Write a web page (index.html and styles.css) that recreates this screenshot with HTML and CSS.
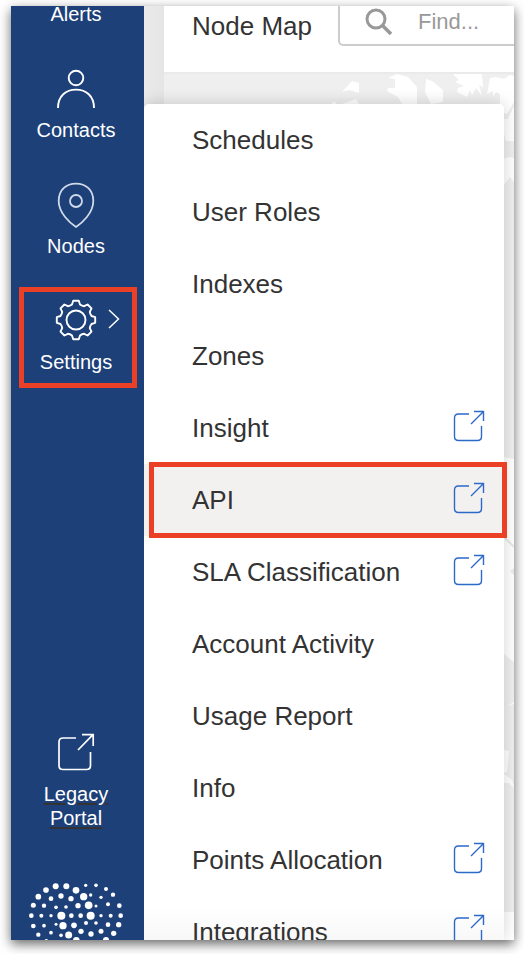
FILE: index.html
```html
<!DOCTYPE html>
<html lang="en">
<head>
<meta charset="utf-8">
<title>Node Map</title>
<link rel="stylesheet" href="styles.css">
</head>
<body>
<svg class="defs" width="0" height="0" aria-hidden="true">
  <symbol id="external" viewBox="452 408 36 36">
    <path d="M469 414H458.500Q454.500 414 454.500 418V436.500Q454.500 440.500 458.500 440.500H477.500Q481.500 440.500 481.500 436.500V426M471 424L483.500 411.500M474 411.500H483.500V421" fill="none" stroke="currentColor" stroke-width="1.400"/>
  </symbol>
</svg>
<div class="window">
  <nav class="sidebar">
    <a class="item first"><span>Alerts</span></a>
    <a class="item">
      <svg class="icon" viewBox="46 66 60 48"><g fill="none" stroke="#fff" stroke-width="1.900"><circle cx="76" cy="78" r="7.300"/><path d="M58 108C58 96 66 89.600 76 89.600S94 96 94 108"/></g></svg>
      <span>Contacts</span>
    </a>
    <a class="item">
      <svg class="icon" viewBox="46 182 60 48"><g fill="none" stroke="#d0d9e8" stroke-width="1.800"><circle cx="76" cy="201" r="6"/><path d="M76 227C70 223 58.700 213 58.700 201C58.700 190 66 183.700 76 183.700S93.300 190 93.300 201C93.300 213 82 223 76 227Z"/></g></svg>
      <span>Nodes</span>
    </a>
    <a class="item settings">
      <svg class="icon" viewBox="46 298 60 48"><g transform="translate(76 320)" fill="none" stroke="#fff" stroke-width="1.900" stroke-linejoin="round"><circle r="9.500"/><path d="M-2.800-19.200H2.800L4-15.500Q6-14 8.100-13.800L11.600-15.500L15.500-11.600L13.800-8.100Q14-6 15.500-4L19.200-2.800V2.800L15.500 4Q14 6 13.800 8.100L15.500 11.600L11.600 15.500L8.100 13.800Q6 14 4 15.500L2.800 19.200H-2.800L-4 15.500Q-6 14-8.100 13.800L-11.600 15.500L-15.500 11.600L-13.800 8.100Q-14 6-15.500 4L-19.200 2.800V-2.800L-15.500-4Q-14-6-13.800-8.100L-15.500-11.600L-11.600-15.500L-8.100-13.800Q-6-14-4-15.500Z"/></g></svg>
      <svg class="chevron" viewBox="0 0 12 20"><path d="M1 1L10.500 10L1 19" fill="none" stroke="#fff" stroke-width="1.500"/></svg>
      <span>Settings</span>
    </a>
    <a class="item legacy">
      <svg class="icon" viewBox="46 730 60 48"><path d="M76 738H63Q59 738 59 742V765.500Q59 769.500 63 769.500H86.500Q90.500 769.500 90.500 765.500V752M78 750L93 734.700M82 734.700H93.200V746" fill="none" stroke="#fff" stroke-width="1.700"/></svg>
      <span>Legacy<br>Portal</span>
    </a>
    <svg class="logo" viewBox="84 60 288 180"><g fill="#fff">
      <circle cx="167" cy="79" r="9"/><circle cx="199" cy="79" r="9"/><circle cx="257" cy="76" r="5"/><circle cx="288" cy="76" r="5.500"/><circle cx="138" cy="90" r="8.500"/><circle cx="228" cy="91" r="10"/><circle cx="318" cy="87" r="6"/>
      <circle cx="115" cy="110" r="8.500"/><circle cx="153" cy="116" r="7"/><circle cx="183" cy="108" r="8"/><circle cx="213" cy="116" r="8"/><circle cx="251" cy="110" r="11"/><circle cx="272" cy="105" r="5"/><circle cx="303" cy="112" r="5"/><circle cx="339" cy="104" r="6.500"/>
      <circle cx="100" cy="136" r="7.500"/><circle cx="132" cy="137" r="6.500"/><circle cx="168" cy="142" r="5.500"/><circle cx="198" cy="141" r="5.500"/><circle cx="234" cy="137" r="8"/><circle cx="266" cy="136" r="11.500"/><circle cx="288" cy="138" r="4.500"/><circle cx="324" cy="133" r="6"/><circle cx="358" cy="137" r="7"/>
      <circle cx="94" cy="167" r="7"/><circle cx="124" cy="167" r="6"/><circle cx="153" cy="167" r="5"/><circle cx="184" cy="167" r="12"/><circle cx="214" cy="167" r="7"/><circle cx="242" cy="167" r="7"/><circle cx="272" cy="167" r="12"/><circle cx="303" cy="167" r="5"/><circle cx="332" cy="167" r="6"/><circle cx="362" cy="167" r="7"/>
      <circle cx="100" cy="198" r="7"/><circle cx="132" cy="197" r="5.500"/><circle cx="168" cy="193" r="4.500"/><circle cx="189" cy="197" r="11"/><circle cx="222" cy="196" r="8.500"/><circle cx="258" cy="189" r="6"/><circle cx="288" cy="189" r="5.500"/><circle cx="324" cy="194" r="7"/><circle cx="356" cy="194" r="8"/>
      <circle cx="115" cy="224" r="6.500"/><circle cx="153" cy="218" r="5.500"/><circle cx="183" cy="226" r="5.500"/><circle cx="206" cy="225" r="10.500"/><circle cx="243" cy="214" r="8"/><circle cx="273" cy="222" r="8"/><circle cx="303" cy="214" r="7.500"/><circle cx="341" cy="220" r="8"/><circle cx="139" cy="242" r="5"/><circle cx="229" cy="241" r="10"/><circle cx="318" cy="240" r="9"/>
    </g></svg>
  </nav>
  <div class="gutter"></div>
  <main class="main">
    <header class="header">
      <h1>Node Map</h1>
      <div class="search">
        <svg viewBox="0 0 28 28"><circle cx="11" cy="11" r="9" fill="none" stroke="#999" stroke-width="3"/><path d="M17 17L26 26" stroke="#999" stroke-width="3.600"/></svg>
        <span>Find...</span>
      </div>
    </header>
    <svg class="map" viewBox="164 74 350 866">
      <path fill="#fff" d="M342 92L352 81L359 83V93L349 90ZM331 104L335 101L336 104ZM342 104L356 99L359 104ZM388 78L397 74L408 77L417 87V104H402L398 97L387 91L388 88H395V79ZM426 79L432 81L443 90V102L431 104L425 92ZM453 74H482L483 88L479 84L482 96L476 88L472 95L470 90L467 97L457 92L458 88L464 86L455 82L459 80ZM487 94L490 78L496 77L504 79L510 75L514 76V102L507 114L500 112V94L496 92L493 97V91ZM504 119H508L514 106V141H506L504 134ZM504 159L509 157L514 158V182L510 177L504 185ZM504 457L514 459V570H504ZM504 570H514V662L504 654ZM504 708L514 702V704L505 707ZM504 750L509 751L507 772L504 773Z"/>
      <path fill="#fff" d="M504 774L512 780L514 788L509 783L504 783ZM504 912H514V940H504Z"/>
      <path d="M504 537L514 547" fill="none" stroke="#e8e8e8" stroke-width="2"/>
      <path fill="#ebebeb" d="M510 571L514 568V575Z"/>
    </svg>
  </main>
  <ul class="menu">
    <li>Schedules</li>
    <li>User Roles</li>
    <li>Indexes</li>
    <li>Zones</li>
    <li>Insight<svg><use href="#external"/></svg></li>
    <li class="active">API<svg><use href="#external"/></svg></li>
    <li>SLA Classification<svg><use href="#external"/></svg></li>
    <li>Account Activity</li>
    <li>Usage Report</li>
    <li>Info</li>
    <li>Points Allocation<svg><use href="#external"/></svg></li>
    <li>Integrations<svg><use href="#external"/></svg></li>
  </ul>
</div>
</body>
</html>
```

FILE: styles.css
```css
*, *::after { box-sizing: border-box; }
body {
  margin: 0;
  padding: 6px 10px 14px 11px;
  height: 954px;
  overflow: hidden;
  background: #fff;
  color: #333;
  font-family: "Liberation Sans", Arial, sans-serif;
}
.defs { position: absolute; }
.window {
  position: relative;
  display: flex;
  width: 503px;
  height: 934px;
  box-shadow: 0 4px 11px rgba(0, 0, 0, .6);
}
.sidebar {
  display: flex;
  flex-direction: column;
  flex: none;
  width: 133px;
  height: 934px;
  overflow: hidden;
  background: #1d4079;
  color: #fff;
  font-size: 20px;
  line-height: 24px;
  text-align: center;
}
.item {
  position: relative;
  display: flex;
  flex-direction: column;
  flex: none;
  align-items: center;
  justify-content: flex-end;
  width: 130px;
  height: 116px;
}
.item.first { height: 20px; justify-content: flex-start; line-height: 16px; }
.icon { width: 60px; height: 48px; margin-bottom: 4px; }
.chevron {
  position: absolute;
  left: 97px;
  top: 51px;
  width: 12px;
  height: 20px;
}
.settings::after {
  content: "";
  position: absolute;
  left: 8px;
  top: 29px;
  width: 118px;
  height: 101px;
  border: 5px solid #eb4025;
}
.legacy {
  height: 100px;
  margin-top: 356px;
  text-decoration: underline;
  text-decoration-color: #333;
  text-decoration-thickness: 2px;
  text-underline-offset: 2px;
}
.logo { flex: none; width: 96px; height: 60px; margin: 50px 0 0 17px; }
.gutter { width: 20px; flex: none; background: linear-gradient(90deg, #eaeaea, #e5e5e5); }
.main {
  flex: none;
  width: 350px;
  height: 934px;
  overflow: hidden;
  background: #efefef;
}
.header {
  display: flex;
  height: 66px;
  padding-left: 28px;
  background: #fff;
}
h1 {
  flex: none;
  width: 146px;
  margin: 5px 0 0;
  font-size: 26px;
  font-weight: 400;
  line-height: 30px;
}
.search {
  display: flex;
  flex: none;
  width: 190px;
  height: 60px;
  margin-top: -20px;
  padding: 21px 0 0 25px;
  border: 2px solid #ccc;
  border-radius: 5px;
  color: #999;
  font-size: 22px;
  line-height: 26px;
}
.search svg { width: 28px; height: 28px; margin: -1px 25px 0 0; }
.map {
  display: block;
  width: 350px;
  height: 868px;
  border-top: 2px solid #eaeaea;
}
.menu {
  position: absolute;
  left: 133px;
  top: 98px;
  width: 360px;
  height: 836px;
  margin: 0;
  padding: 0;
  list-style: none;
  background: linear-gradient(#fff 96%, #f8f8f8);
  border-radius: 5px 5px 0 0;
  box-shadow: 0 0 16px rgba(0, 0, 0, .18);
  clip-path: inset(-16px -10px 0 0);
  font-size: 26px;
}
.menu li {
  position: relative;
  display: flex;
  align-items: center;
  justify-content: space-between;
  height: 72px;
  padding: 0 16px 0 48px;
}
.menu svg { width: 36px; height: 36px; margin-top: -4px; color: #2d69c9; }
.menu .active { background: #f3f1f0; }
.menu .active::after {
  content: "";
  position: absolute;
  left: 5px;
  top: -2px;
  width: 358px;
  height: 76px;
  border: 5px solid #eb4025;
}
.menu li:last-child {
  height: 44px;
  overflow: hidden;
  align-items: flex-start;
  padding-top: 21px;
  line-height: 30px;
}
.menu li:last-child svg { margin-top: -5px; }
```
